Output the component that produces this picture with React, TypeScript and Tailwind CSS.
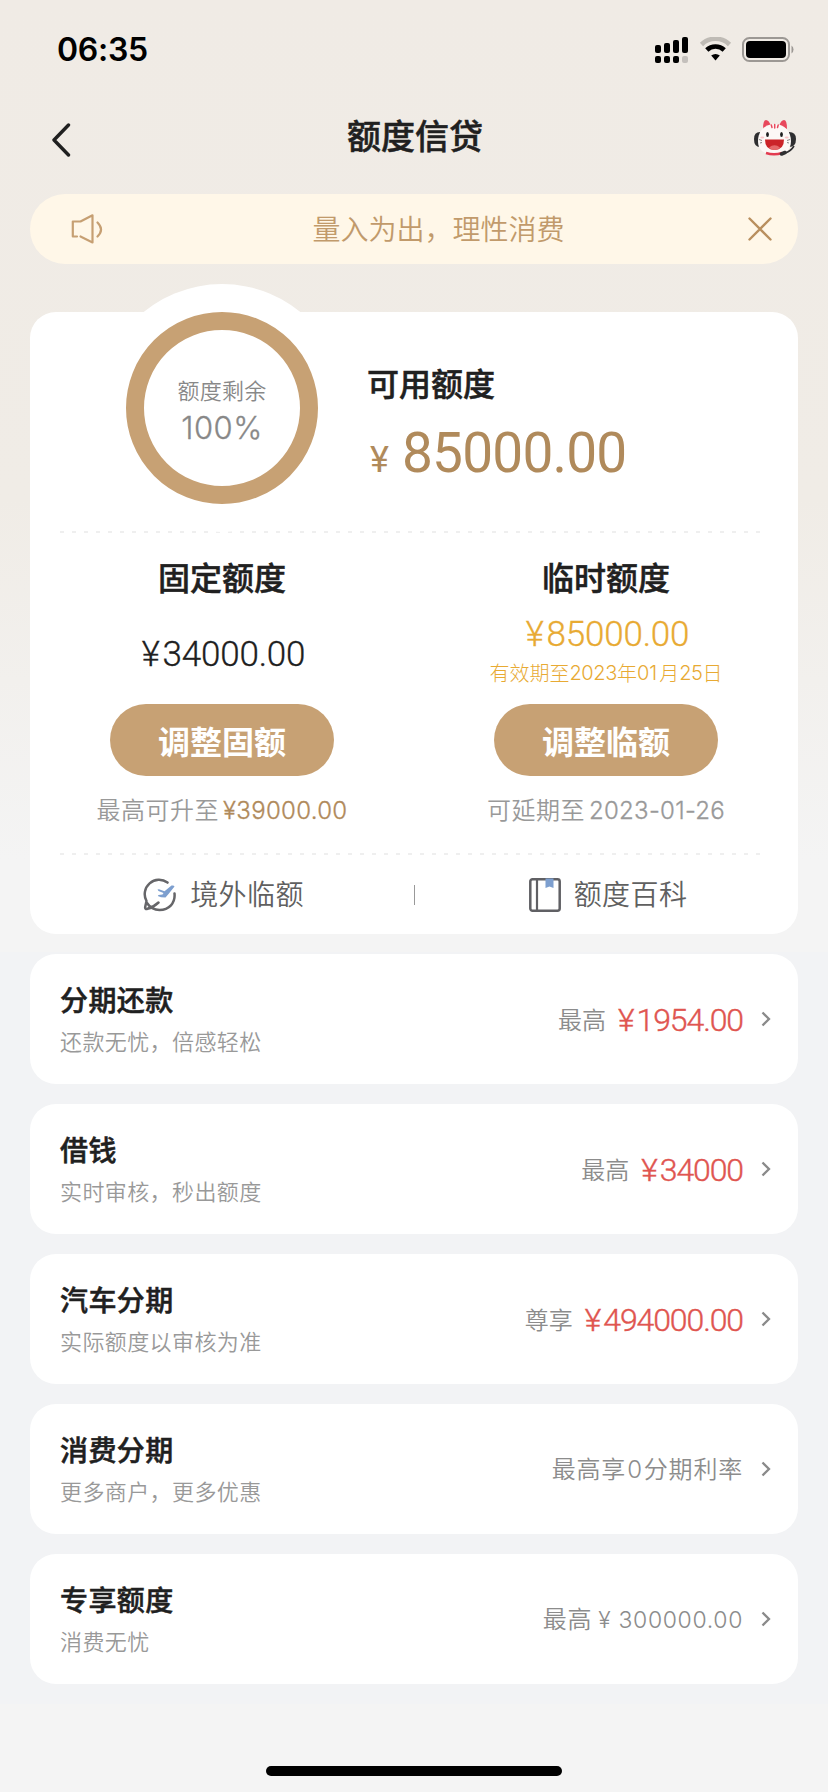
interface CreditProduct {
  id: string;
  title: string;
  subtitle: string;
  prefix?: string;
  amount?: string;
  note?: React.ReactNode;
}

const products: CreditProduct[] = [
  {
    id: "installment",
    title: "分期还款",
    subtitle: "还款无忧，倍感轻松",
    prefix: "最高",
    amount: "1954.00",
  },
  {
    id: "loan",
    title: "借钱",
    subtitle: "实时审核，秒出额度",
    prefix: "最高",
    amount: "34000",
  },
  {
    id: "car",
    title: "汽车分期",
    subtitle: "实际额度以审核为准",
    prefix: "尊享",
    amount: "494000.00",
  },
  {
    id: "consume",
    title: "消费分期",
    subtitle: "更多商户，更多优惠",
    note: (
      <>
        最高享<span className="mx-px font-['Inter']">0</span>分期利率
      </>
    ),
  },
  {
    id: "exclusive",
    title: "专享额度",
    subtitle: "消费无忧",
    note: (
      <>
        最高
        <span className="ml-1.5 font-['Inter'] text-[23px] tracking-[0.65px]">
          ¥ 300000.00
        </span>
      </>
    ),
  },
];

function StatusBar() {
  return (
    <div className="flex h-[98px] justify-between pl-[57px] pr-[33px] pt-[30px]">
      <span className="font-['Inter'] text-[32px] font-semibold leading-[40px] tracking-[-0.3px] text-black">
        06:35
      </span>
      <div className="flex items-start gap-[10px] pt-[7px]">
        <svg width="34" height="26" viewBox="0 0 34 26">
          <rect x="0" y="8" width="6" height="8" rx="2" />
          <rect x="9" y="6" width="6" height="10" rx="2" />
          <rect x="18" y="3" width="6" height="13" rx="2" />
          <rect x="27" y="0" width="6" height="16" rx="2" />
          <rect x="0" y="19" width="6" height="7" rx="2" />
          <rect x="9" y="19" width="6" height="7" rx="2" />
          <rect x="18" y="19" width="6" height="7" rx="2" />
          <rect x="27" y="19" width="6" height="7" rx="2" fill="#c4c0bc" />
        </svg>
        <svg width="33" height="26" viewBox="0 0 33 26" fill="none">
          <path d="M2.5 7.5 A20 20 0 0 1 30.5 7.5" stroke="#bfbbb5" strokeWidth="4.6" />
          <path d="M7.8 13 A12.5 12.5 0 0 1 25.2 13" stroke="#000" strokeWidth="4.6" />
          <path d="M12.2 18.6 A6.5 6.5 0 0 1 20.8 18.6 L16.5 23.6 Z" fill="#000" />
        </svg>
        <svg width="53" height="26" viewBox="0 0 53 26">
          <rect x="1" y="1" width="46" height="23" rx="6.5" fill="none" stroke="#9c9894" strokeWidth="2" />
          <rect x="4" y="4" width="40" height="17" rx="4" />
          <path d="M49.5 8.5 A5 5 0 0 1 49.5 16.5 Z" fill="#9c9894" />
        </svg>
      </div>
    </div>
  );
}

function MascotIcon() {
  return (
    <svg width="44" height="38" viewBox="0 0 44 38">
      <path d="M7 13 Q1 13 1 20 Q1 28 7 28 Z" fill="#2e2e30" />
      <path d="M36 13 Q43 13 43 20 Q43 28 36 28 Z" fill="#2e2e30" />
      <path d="M10 10 Q10 1 13 1 Q16 1 18 7 Z" fill="#e8485c" />
      <path d="M34 10 Q34 1 31 1 Q28 1 26 7 Z" fill="#e8485c" />
      <path
        d="M21.5 5 C32 5 38 13 38 22 C38 32 31 35.5 21.5 35.5 C12 35.5 5 32 5 22 C5 13 11 5 21.5 5 Z"
        fill="#fcf8f6"
      />
      <path d="M21.7 5.5V9M18.3 6L19 8.5M25.2 6L24.5 8.5" stroke="#e8485c" strokeWidth="1.5" strokeLinecap="round" />
      <ellipse cx="14.5" cy="15.5" rx="1.4" ry="2.6" fill="#1f1f1f" />
      <ellipse cx="28.5" cy="15.5" rx="1.4" ry="2.6" fill="#1f1f1f" />
      <ellipse cx="9.3" cy="18.5" rx="2" ry="1" fill="#f9c3c6" />
      <ellipse cx="33.7" cy="18.5" rx="2" ry="1" fill="#f9c3c6" />
      <path d="M12 20.5 H31 Q31 31 21.5 31 Q12 31 12 20.5 Z" fill="#cb2429" />
      <path d="M16 28.5 Q21.5 24 27 28.5 Q25 31 21.5 31 Q18 31 16 28.5 Z" fill="#e5696a" />
      <path d="M13 34 Q21 36.5 29 34" stroke="#e33b50" strokeWidth="2.4" fill="none" />
      <path d="M41 27 Q38 32 32.5 34" stroke="#2e2e30" strokeWidth="1.6" fill="none" />
      <path d="M28.5 35 L32 33.5" stroke="#2e2e30" strokeWidth="3.6" strokeLinecap="round" />
      <path d="M6 20.5 L9 21.5 M7 24 L9 23.5 M37 20.5 L34 21.5 M36 24 L34 23.5" stroke="#666" strokeWidth="0.8" />
    </svg>
  );
}

function NavBar() {
  return (
    <header className="flex h-24 items-start justify-between pl-[51px] pr-[31px]">
      <svg className="mt-[25px]" width="26" height="34" viewBox="0 0 26 34" fill="none">
        <path
          d="M17.5 2 L3 17 L17.5 32"
          stroke="#202020"
          strokeWidth="3.4"
          strokeLinecap="round"
          strokeLinejoin="round"
        />
      </svg>
      <h1 className="mt-[13px] text-[34px] font-medium leading-[48px] text-[#202020] [-webkit-text-stroke:0.5px]">
        额度信贷
      </h1>
      <div className="mt-[21px]">
        <MascotIcon />
      </div>
    </header>
  );
}

function NoticeBar() {
  return (
    <div className="mx-[30px] flex h-[70px] items-center justify-between rounded-full bg-[#fff7e8] pl-[41px] pr-[26px]">
      <svg width="33" height="32" viewBox="0 0 33 32" fill="none" stroke="#c69f72" strokeWidth="2.2" strokeLinecap="round" strokeLinejoin="round">
        <path d="M6 23.5 H1.8 V8.5 H9.5 L21.5 2.3 V29.5 L9.5 23.5" />
        <path d="M26.5 9.5 Q33.5 16.5 26.5 23.5" />
      </svg>
      <p className="ml-[25px] pb-0.5 text-[28px] font-[350] leading-[40px] text-[#c19a6b]">
        量入为出，理性消费
      </p>
      <svg width="24" height="24" viewBox="0 0 24 24" stroke="#b98f5e" strokeWidth="2.4" strokeLinecap="round">
        <path d="M1.5 1.5 L22.5 22.5 M22.5 1.5 L1.5 22.5" />
      </svg>
    </div>
  );
}

function DashedLine() {
  return (
    <div className="mx-[30px] h-0.5 bg-[repeating-linear-gradient(90deg,#efefef_0_4px,transparent_4px_12px)]" />
  );
}

function PlaneIcon() {
  return (
    <svg width="34" height="34" viewBox="0 0 34 34" fill="none">
      <path
        d="M24.5 4.6 A14.3 14.3 0 0 0 3.5 23 L2.2 29 Q1.8 31.5 4.5 30.8 Q10 29.5 15.5 24.5 M4 25 Q8.5 32 16.5 32 C26 32 32.5 25 31.5 15.5"
        stroke="#666669"
        strokeWidth="2.5"
        strokeLinecap="round"
        strokeLinejoin="round"
      />
      <path
        d="M14.5 11.5 L16 11.2 L21.5 13.2 L28.5 7.6 Q31 7 31.5 8.5 L25.5 16 L22.5 19.5 L18 19.3 L14.8 18 L15.5 17 L19.5 16.6 L20.5 15 L15.5 13 Z"
        fill="#7d9fcf"
      />
    </svg>
  );
}

function BookIcon() {
  return (
    <svg width="32" height="34" viewBox="0 0 32 34" fill="none">
      <rect x="1.3" y="1.3" width="29.4" height="31.4" rx="2.2" stroke="#606064" strokeWidth="2.5" />
      <path d="M8 2 V32" stroke="#606064" strokeWidth="2.2" />
      <path d="M16.5 0.5 H24.5 V10 L20.5 8.6 L16.5 10 Z" fill="#7d9fcf" />
    </svg>
  );
}

function QuotaRing() {
  return (
    <div className="absolute -top-7 left-[68px] flex size-[248px] items-center justify-center rounded-full bg-white">
      <div className="flex size-[192px] flex-col items-center rounded-full border-[18px] border-[#c7a174] pt-[43px] text-[#888]">
        <span className="text-[22px] font-[350] leading-[32px] tracking-[0.2px]">额度剩余</span>
        <span className="mt-1 font-['Inter'] text-[31px] font-[350] leading-[38px] tracking-[0.5px] [-webkit-text-stroke:0.3px]">
          100%
        </span>
      </div>
    </div>
  );
}

function QuotaCard() {
  return (
    <section className="relative mx-[30px] mt-12 h-[622px] rounded-[26px] bg-white">
      <QuotaRing />
      <div className="relative h-[219px] pl-[337px] pt-[47px]">
        <h2 className="text-[32px] font-medium leading-[46px] text-[#202020] [-webkit-text-stroke:0.5px]">
          可用额度
        </h2>
        <p className="mt-5 flex items-baseline font-['Roboto'] leading-[56px] text-[#b08a5b]">
          <span className="ml-[3px] w-[32px] text-[36px]">¥</span>
          <span className="text-[55px] tracking-[-0.8px]">85000.00</span>
        </p>
      </div>
      <DashedLine />
      <div className="grid h-[320px] grid-cols-2">
        <div className="flex flex-col items-center pt-5">
          <h3 className="text-[32px] font-medium leading-[46px] text-[#202020] [-webkit-text-stroke:0.5px]">
            固定额度
          </h3>
          <p className="mt-9 flex h-[40px] items-center pl-[3px] font-['Roboto'] text-[35px] font-light tracking-[-0.2px] text-[#202020] [-webkit-text-stroke:0.3px]">
            <span className="mr-[3px]">¥</span>34000.00
          </p>
          <button className="mt-[29px] h-[72px] w-[224px] rounded-full bg-[#c7a174] text-[32px] font-semibold leading-[67px] text-white">
            调整固额
          </button>
          <p className="mt-[15px] text-[24px] font-[350] leading-[36px] tracking-[0.5px] text-[#999]">
            最高可升至
            <span className="ml-1 font-['Inter'] text-[24px] tracking-[0.3px] text-[#b08a5b] [-webkit-text-stroke:0.3px]">
              ¥39000.00
            </span>
          </p>
        </div>
        <div className="flex flex-col items-center pt-5">
          <h3 className="text-[32px] font-medium leading-[46px] text-[#202020] [-webkit-text-stroke:0.5px]">
            临时额度
          </h3>
          <p className="mt-4 flex h-[40px] items-center pl-[3px] font-['Roboto'] text-[35px] font-light tracking-[-0.2px] text-[#e8aa33] [-webkit-text-stroke:0.3px]">
            <span className="mr-[3px]">¥</span>85000.00
          </p>
          <p className="flex h-[36px] items-center text-[20px] font-light text-[#e8aa33]">
            有效期至<span className="font-['Inter'] tracking-[-0.4px]">2023</span>年
            <span className="mr-0.5 font-['Inter']">01</span>月
            <span className="font-['Inter'] tracking-[-0.4px]">25</span>日
          </p>
          <button className="mt-[13px] h-[72px] w-[224px] rounded-full bg-[#c7a174] text-[32px] font-semibold leading-[67px] text-white">
            调整临额
          </button>
          <p className="mt-[15px] text-[24px] font-[350] leading-[36px] tracking-[0.5px] text-[#999]">
            可延期至
            <span className="ml-1 font-['Inter'] text-[24px] tracking-[0.3px] [-webkit-text-stroke:0.3px]">
              2023-01-26
            </span>
          </p>
        </div>
      </div>
      <DashedLine />
      <div className="flex h-[79px] items-center text-[28px] font-[350] tracking-[0.4px] text-[#606060]">
        <div className="flex w-[384px] items-center justify-center gap-[13px] pl-[3px]">
          <PlaneIcon />
          <span className="pb-[3px] leading-[40px]">境外临额</span>
        </div>
        <div className="h-5 w-px bg-[#999]" />
        <div className="flex flex-1 items-center justify-center gap-[13px] pl-[3px]">
          <BookIcon />
          <span className="pb-[3px] leading-[40px]">额度百科</span>
        </div>
      </div>
    </section>
  );
}

function ProductRow({ product }: { product: CreditProduct }) {
  return (
    <li className="flex h-[130px] items-center justify-between rounded-[26px] bg-white pl-[30px] pr-[27px]">
      <div className="pt-px">
        <h3 className="text-[28px] font-medium leading-[42px] tracking-[0.4px] text-[#202020] [-webkit-text-stroke:0.5px]">
          {product.title}
        </h3>
        <p className="text-[22px] font-[350] leading-[41px] tracking-[0.4px] text-[#999]">
          {product.subtitle}
        </p>
      </div>
      <div className="flex items-center">
        {product.amount ? (
          <>
            <span className="mr-[12px] text-[24px] font-[350] leading-[38px] text-[#8c8c8c]">
              {product.prefix}
            </span>
            <span className="mt-0.5 font-['Roboto'] text-[32px] font-light leading-[38px] tracking-[-1.1px] text-[#e05550] [-webkit-text-stroke:0.4px]">
              <span className="mr-[3px]">¥</span>
              {product.amount}
            </span>
          </>
        ) : (
          <span className="text-[24px] font-[350] leading-[38px] tracking-[0.8px] text-[#8c8c8c]">
            {product.note}
          </span>
        )}
        <svg className="mb-px ml-[18px]" width="10" height="16" viewBox="0 0 10 16" fill="none">
          <path d="M1.5 1.5 L8 8 L1.5 14.5" stroke="#8a8a8a" strokeWidth="2.3" />
        </svg>
      </div>
    </li>
  );
}

export default function App() {
  return (
    <main className="flex h-[1792px] w-[828px] flex-col bg-[linear-gradient(180deg,#f0ebe5_0px,#f0ece6_500px,#f4f4f4_860px,#f4f4f4_100%)] font-['Noto_Sans_CJK_SC',sans-serif]">
      <StatusBar />
      <NavBar />
      <NoticeBar />
      <QuotaCard />
      <ul className="mt-[18px] flex flex-col gap-5 bg-[#f2f3f5] px-[30px] pb-5 pt-0.5">
        {products.map((product) => (
          <ProductRow key={product.id} product={product} />
        ))}
      </ul>
      <div className="mx-auto mb-4 mt-auto h-[10px] w-[296px] rounded-full bg-black" />
    </main>
  );
}
